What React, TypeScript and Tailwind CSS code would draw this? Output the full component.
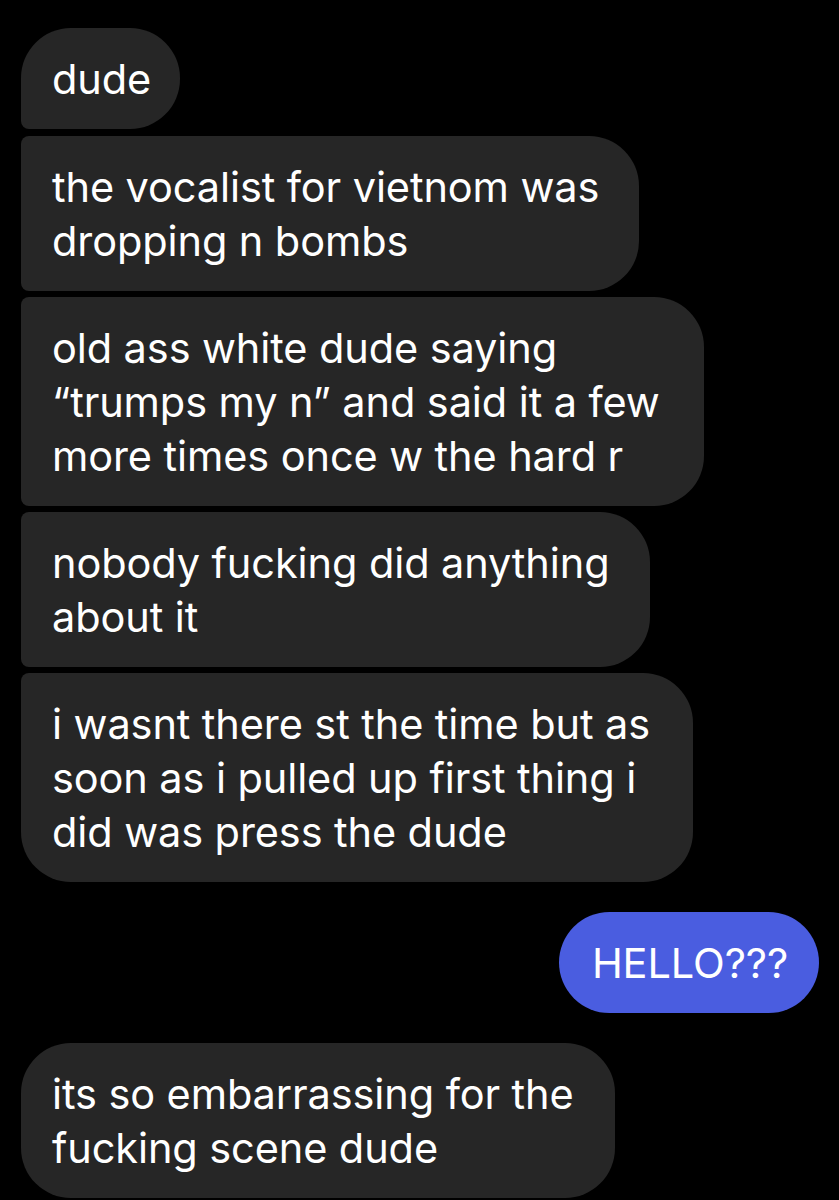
import React from 'react';

type Msg = {
  lines: string[];
  mine?: boolean;
  corners: string;
  gap: string;
  pad: string;
};

const messages: Msg[] = [
  { lines: ['dude'], corners: 'rounded-[50px] rounded-bl-[8px]', gap: 'mt-0', pad: 'pl-[31px] pr-[29px]' },
  {
    lines: ['the vocalist for vietnom was', 'dropping n bombs'],
    corners: 'rounded-[50px] rounded-tl-[8px] rounded-bl-[8px]',
    gap: 'mt-[7px]',
    pad: 'pl-[31px] pr-[40px]',
  },
  {
    lines: ['old ass white dude saying', '\u201Ctrumps my n\u201D and said it a few', 'more times once w the hard r'],
    corners: 'rounded-[50px] rounded-tl-[8px] rounded-bl-[8px]',
    gap: 'mt-[6px]',
    pad: 'pl-[31px] pr-[44px]',
  },
  {
    lines: ['nobody fucking did anything', 'about it'],
    corners: 'rounded-[50px] rounded-tl-[8px] rounded-bl-[8px]',
    gap: 'mt-[6px]',
    pad: 'pl-[31px] pr-[40px]',
  },
  {
    lines: ['i wasnt there st the time but as', 'soon as i pulled up first thing i', 'did was press the dude'],
    corners: 'rounded-[50px] rounded-tl-[8px]',
    gap: 'mt-[6px]',
    pad: 'pl-[31px] pr-[43px]',
  },
  { lines: ['HELLO???'], mine: true, corners: 'rounded-[51px]', gap: 'mt-[30px]', pad: 'pl-[33px] pr-[31px]' },
  {
    lines: ['its so embarrassing for the', 'fucking scene dude'],
    corners: 'rounded-[50px]',
    gap: 'mt-[30px]',
    pad: 'pl-[31px] pr-[41px]',
  },
];

export default function App() {
  return (
    <div className="h-[1200px] w-full overflow-hidden bg-black pt-[28px] pl-[21px] pr-[20px] font-['Inter',sans-serif]">
      <div className="flex flex-col">
        {messages.map((m, i) => (
          <div key={i} className={`flex ${m.mine ? 'justify-end' : 'justify-start'} ${m.gap}`}>
            <div
              className={`${m.corners} ${m.mine ? 'bg-[#4a5de0]' : 'bg-[#262626]'} ${m.pad} pt-[24px] pb-[23px] text-[41.5px] leading-[54px] tracking-[-0.1px] text-white whitespace-nowrap`}
            >
              {m.lines.map((l, j) => (
                <div key={j}>{l}</div>
              ))}
            </div>
          </div>
        ))}
      </div>
    </div>
  );
}
